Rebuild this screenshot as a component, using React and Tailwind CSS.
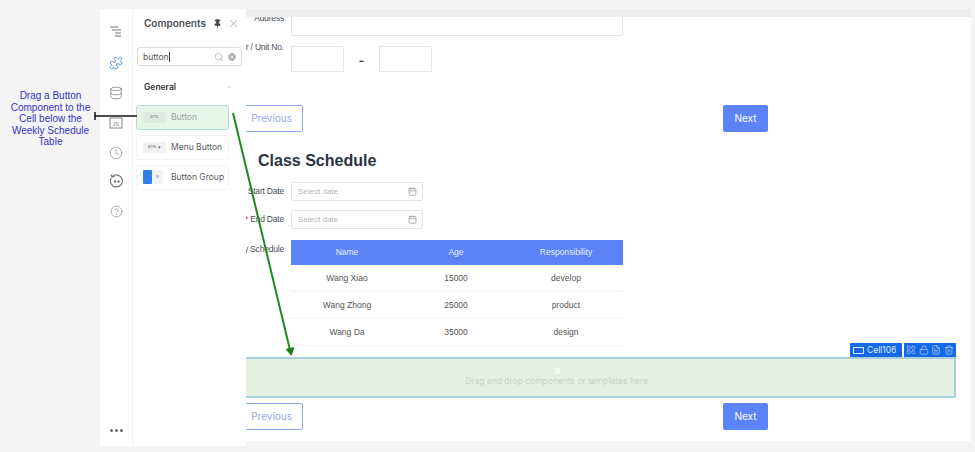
import React from "react";
import { Pin, X, Search, CircleX, ChevronUp, Calendar, LayoutGrid, Lock, FileText, Trash2, Puzzle, Database, Clock, CircleHelp } from "lucide-react";

const font = { fontFamily: "Inter, 'Liberation Sans', sans-serif" };

function Label({ children, star }) {
  return (
    <div className="w-[38px] shrink-0 flex justify-end whitespace-nowrap font-['Liberation_Sans'] text-[8.5px] tracking-[-0.2px] text-[#4a4f57] overflow-hidden">
      {star && <span className="text-[#e0483e] mr-[2px]">*</span>}
      {children}
    </div>
  );
}

function DateRow({ label, star, className }) {
  return (
    <div className={"flex items-center gap-[7px] " + className}>
      <Label star={star}>{label}</Label>
      <div className="w-[132px] h-[19px] border border-[#e3e3e3] rounded-[2px] flex items-center justify-between pl-[6px] pr-[5px] font-['Liberation_Sans'] text-[8px] text-[#b5b5b5]">
        Select date
        <Calendar size={9} className="text-[#999]" />
      </div>
    </div>
  );
}

function Buttons({ className }) {
  return (
    <div className={"flex justify-between w-[522px] " + className}>
      <div className="w-[57px] h-[27px] border border-l-0 border-[#8ea6ec] rounded-r-[2px] flex items-center justify-end pr-[10px] text-[10px] text-[#9aa9ee]">Previous</div>
      <div className="w-[45px] h-[27px] bg-[#5b83f7] rounded-[2px] flex items-center justify-center text-[10px] text-white">Next</div>
    </div>
  );
}

function Row({ name, age, role }) {
  return (
    <div className="grid grid-cols-[112px_106px_114px] h-[27px] items-center text-center font-['Liberation_Sans'] text-[8.5px] text-[#555] border-b border-[#eeeeee]">
      <div>{name}</div>
      <div>{age}</div>
      <div>{role}</div>
    </div>
  );
}

function Item({ thumb, label, active, className }) {
  return (
    <div className={"w-[93px] h-[25px] flex items-center gap-[5px] pl-[6px] rounded-[3px] border text-[8.5px] " + (active ? "bg-[#e4f5e9] border-[#b6dcd2] text-[#9aa59e]" : "bg-white border-[#f3f3f3] text-[#5c5c5c]") + " " + className}>
      <div className="w-[24px] shrink-0 flex justify-start">{thumb}</div>
      <span className="whitespace-nowrap -ml-[1px]">{label}</span>
    </div>
  );
}

function TreeIcon() {
  return (
    <svg width="14" height="13" viewBox="0 0 14 13" fill="none" stroke="#777" strokeWidth="1.2">
      <path d="M1 2H9M3 5H12M6 8H12M6 11H12" />
    </svg>
  );
}

function ScriptIcon() {
  return (
    <svg width="14" height="12" viewBox="0 0 14 12" fill="none">
      <rect x="1" y="1" width="12" height="10" stroke="#888" strokeWidth="1" />
      <text x="7" y="8.5" textAnchor="middle" fontSize="5.5" fill="#777" fontFamily="Liberation Sans">JS</text>
    </svg>
  );
}

function ReplayIcon() {
  return (
    <svg width="15" height="15" viewBox="0 0 15 15" fill="none" stroke="#777" strokeWidth="1.2">
      <path d="M3.3 3.6A6 6 0 1 1 2.2 5" />
      <path d="M2 1.5L3 4L5.7 3.4" />
      <circle cx="6" cy="8.5" r="0.6" fill="#777" />
      <circle cx="9.5" cy="8.5" r="0.6" fill="#777" />
    </svg>
  );
}

export default function App() {
  return (
    <div className="relative w-[975px] h-[452px] bg-[#f4f4f4] overflow-hidden flex" style={font}>
      <div className="w-[100px] shrink-0 pt-[90px] text-center font-['Liberation_Sans'] text-[10px] leading-[11.5px] text-[#3434c4]">
        <div className="w-[101px]">Drag a Button<br />Component to the<br />Cell below the<br />Weekly Schedule<br />Table</div>
      </div>

      <div className="w-[146px] h-[437px] mt-[9px] shrink-0 bg-white flex">
        <div className="w-[33px] shrink-0 border-r border-[#f2f2f2] flex flex-col items-center pt-[16px] text-[#888]">
          <TreeIcon />
          <Puzzle size={14} strokeWidth={1.4} className="mt-[18px] text-[#3f7be0]" />
          <Database size={14} strokeWidth={1.4} className="mt-[16px]" />
          <div className="mt-[17px] h-[12px]"><ScriptIcon /></div>
          <Clock size={14} strokeWidth={1.2} className="mt-[17px]" />
          <div className="mt-[13px] h-[15px]"><ReplayIcon /></div>
          <CircleHelp size={13} strokeWidth={1.3} className="mt-[17px]" />
          <div className="mt-auto mb-[14px] flex gap-[2px]">
            <span className="w-[3px] h-[3px] rounded-full bg-[#666]" />
            <span className="w-[3px] h-[3px] rounded-full bg-[#666]" />
            <span className="w-[3px] h-[3px] rounded-full bg-[#666]" />
          </div>
        </div>
        <div className="flex-1 min-w-0 pl-[3px]">
          <div className="flex items-center pl-[8px] h-[28px]">
            <span className="text-[10px] font-semibold text-[#4a4f57]">Components</span>
            <Pin size={9} className="ml-[7px] text-[#444]" fill="#444" />
            <X size={13} strokeWidth={1} className="ml-[5px] text-[#777]" />
          </div>
          <div className="w-[105px] h-[19px] mt-[10px] ml-[1px] border border-[#dcdcdc] rounded-[3px] flex items-center pl-[5px] pr-[4px] text-[8.5px] text-[#555]">
            <span className="border-r border-[#333] pr-[0.5px] leading-[10px]">button</span>
            <Search size={10} className="ml-auto text-[#bbb]" />
            <CircleX size={10} className="ml-[3px] text-[#999]" fill="#aaa" stroke="#fff" />
          </div>
          <div className="flex items-center justify-between w-[97px] pl-[8px] mt-[15px] text-[8.5px] font-semibold text-[#333]">
            General
            <ChevronUp size={8} className="text-[#bbb]" />
          </div>
          <div className="flex flex-col">
            <Item active className="mt-[11px]" label="Button" thumb={<span className="w-[22px] h-[11px] bg-[#dcebe0] flex items-center justify-center text-[4px] text-[#777]">BTN</span>} />
            <Item className="mt-[5px]" label="Menu Button" thumb={<span className="w-[23px] h-[11px] bg-[#f1f1f1] flex items-center justify-center gap-[2px] text-[4px] text-[#666]">BTN <span className="text-[5px]">▾</span></span>} />
            <Item className="mt-[5px]" label="Button Group" thumb={<span className="flex w-[20px] h-[14px]"><span className="w-[9px] bg-[#2f80ed] rounded-[1px]" /><span className="w-[11px] bg-[#f4f4f4] text-[4px] text-[#888] flex items-center justify-center">N</span></span>} />
          </div>
        </div>
      </div>

      <div className="w-[725px] h-[432px] mt-[9px] shrink-0 bg-[#eeeeee] pt-[8px] flex flex-col">
        <div className="h-[424px] bg-white overflow-hidden">
          <div className="-mt-[8px]">
            <div className="flex gap-[7px] h-[35px] pt-[3px]">
              <Label>Address</Label>
              <div className="w-[332px] h-[24px] border border-[#e3e3e3] rounded-[2px]" />
            </div>
            <div className="flex gap-[7px] mt-[2px]">
              <div className="-mt-[5px]"><Label>Floor / Unit No.</Label></div>
              <div className="flex items-center">
                <div className="w-[53px] h-[26px] border border-[#e6e6e6]" />
                <span className="w-[35px] pt-[3px] text-center text-[13px] font-semibold text-[#444]">-</span>
                <div className="w-[53px] h-[26px] border border-[#e6e6e6]" />
              </div>
            </div>
            <Buttons className="mt-[33px]" />
            <h2 className="ml-[12px] mt-[19px] font-['Liberation_Sans'] text-[16px] leading-[20px] font-bold text-[#2b3340]">Class Schedule</h2>
            <DateRow label="Start Date" className="mt-[11px]" />
            <DateRow label="End Date" star className="mt-[9px]" />
            <div className="flex gap-[7px] mt-[11px]">
              <div className="pt-[3px]"><Label>Weekly Schedule</Label></div>
              <div className="w-[332px]">
                <div className="grid grid-cols-[112px_106px_114px] h-[25px] items-center text-center font-['Liberation_Sans'] text-[8.5px] text-[#e8edff] bg-[#5b83f7]">
                  <div>Name</div><div>Age</div><div>Responsibility</div>
                </div>
                <Row name="Wang Xiao" age="15000" role="develop" />
                <Row name="Wang Zhong" age="25000" role="product" />
                <Row name="Wang Da" age="35000" role="design" />
              </div>
            </div>
            <div className="relative mt-[11px] w-[710px] h-[41px] bg-[#e5f0e3] border-y-2 border-r-2 border-[#a9d0da] flex flex-col items-center justify-center pr-[87px]">
              <span className="w-[6px] h-[6px] bg-[#f2f7f0] mb-[1px]" />
              <span className="text-[8.5px] text-[#c6d3c6]">Drag and drop components or templates here</span>
              <div className="absolute right-[-2px] -top-[16px] h-[14px] flex gap-[2px] text-white">
                <div className="w-[52px] bg-[#1469e6] rounded-t-[1px] flex items-center gap-[3px] pl-[3px] text-[8.5px] text-[#dce9ff]">
                  <span className="w-[11px] h-[7px] border border-[#dce9ff]" />Cell106
                </div>
                <div className="w-[52px] bg-[#1469e6] flex items-center justify-around px-[1px] text-[#bcd5fa]">
                  <LayoutGrid size={10} strokeWidth={1.4} />
                  <Lock size={10} strokeWidth={1.6} />
                  <FileText size={10} strokeWidth={1.6} />
                  <Trash2 size={10} strokeWidth={1.6} />
                </div>
              </div>
            </div>
            <Buttons className="mt-[5px]" />
          </div>
        </div>
      </div>

      <svg className="absolute inset-0 pointer-events-none" width="975" height="452" viewBox="0 0 975 452">
        <path d="M95 116H137" stroke="#111" strokeWidth="1.5" fill="none" />
        <path d="M95 112V120" stroke="#111" strokeWidth="1.5" fill="none" />
        <path d="M233 113L290 350" stroke="#1f8a1f" strokeWidth="2" fill="none" />
        <path d="M285.5 349L294.5 347L291.5 356Z" fill="#1a7d1a" />
      </svg>
    </div>
  );
}
